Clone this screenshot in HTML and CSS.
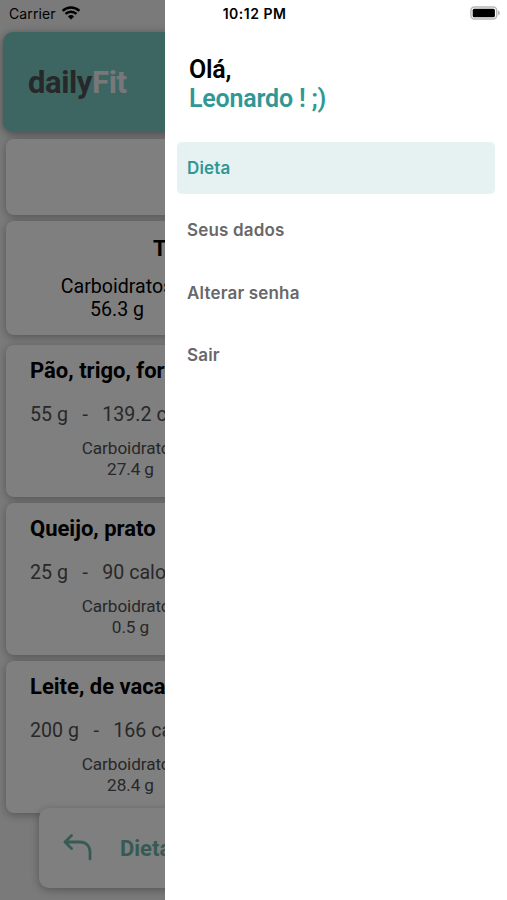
FILE: index.html
```
<!DOCTYPE html>
<html lang="pt-BR">
  <head>
    <meta charset="UTF-8">
    <title>dailyFit</title>
    <link rel="stylesheet" href="styles.css">
  </head>
  <body>
    <div class="screen">
      <div class="header">
        <h1 class="logo">daily<span>Fit</span></h1>
      </div>

      <div class="card date-card"></div>

      <div class="card total-card">
        <h2>Total</h2>
        <div class="nutrient">
          <p>Carboidratos</p>
          <p>56.3 g</p>
        </div>
      </div>

      <div class="card food-card">
        <h2>Pão, trigo, forma</h2>
        <p class="amount"><span>55 g</span><span>-</span><span>139.2 calorias</span></p>
        <div class="nutrient">
          <p>Carboidratos</p>
          <p>27.4 g</p>
        </div>
      </div>

      <div class="card food-card">
        <h2>Queijo, prato</h2>
        <p class="amount"><span>25 g</span><span>-</span><span>90 calorias</span></p>
        <div class="nutrient">
          <p>Carboidratos</p>
          <p>0.5 g</p>
        </div>
      </div>

      <div class="card food-card">
        <h2>Leite, de vaca</h2>
        <p class="amount"><span>200 g</span><span>-</span><span>166 calorias</span></p>
        <div class="nutrient">
          <p>Carboidratos</p>
          <p>28.4 g</p>
        </div>
      </div>

      <div class="bottom-bar">
        <svg class="back-icon" width="30" height="28" viewBox="0 0 30 28">
          <path d="M8.500 1.500L2 8l6.500 6.500M2 8h14.500c6.500 0 10.500 4 10.500 10v7" />
        </svg>
        <span>Dieta</span>
      </div>
    </div>

    <div class="overlay"></div>

    <div class="drawer">
      <h2 class="greeting">Olá,<br><span>Leonardo ! ;)</span></h2>
      <ul class="menu">
        <li class="active">Dieta</li>
        <li>Seus dados</li>
        <li>Alterar senha</li>
        <li>Sair</li>
      </ul>
    </div>

    <div class="status-bar">
      <div class="carrier">
        <span>Carrier</span>
        <svg width="18" height="14" viewBox="0 0 18 14">
          <path d="M0.600 4.900a12 12 0 0 1 16.800 0" />
          <path d="M3.500 7.900a8 8 0 0 1 11 0" />
          <path class="dot" d="M9 13.500L5.900 10.400a4.500 4.500 0 0 1 6.200 0z" />
        </svg>
      </div>
      <span class="time">10:12 PM</span>
      <svg class="battery" width="30" height="14" viewBox="0 0 30 14">
        <rect class="shell" x="0.900" y="0.900" width="25.800" height="12.200" rx="3.500" />
        <rect x="2.700" y="2.700" width="22.200" height="8.600" rx="1.500" />
        <path class="tip" d="M28 4.500c2.500 1 2.500 4 0 5z" />
      </svg>
    </div>
  </body>
</html>
```

FILE: styles.css
```
:root {
  --primary-color: #7accc6;
  --highlight-color: #319795;
  --bg-color: #f4f4f4;
}

* {
  box-sizing: border-box;
}

body {
  position: relative;
  width: 507px;
  height: 900px;
  margin: 0;
  overflow: hidden;
  font-family: "Roboto", sans-serif;
  color: #000;
  background-color: var(--bg-color);
}

h1,
h2,
p,
ul {
  margin: 0;
  padding: 0;
}

.screen {
  display: flex;
  flex-direction: column;
  height: 900px;
  padding: 32px 6px 0;
  overflow: hidden;
}

.header {
  display: flex;
  flex-shrink: 0;
  align-items: center;
  height: 100px;
  margin: 0 -3px 7px;
  padding-left: 25px;
  border-radius: 10px;
  background-color: var(--primary-color);
  box-shadow: 0 2px 9px rgba(0, 0, 0, 0.4);
}

.logo {
  font-size: 31px;
  font-weight: 700;
  letter-spacing: -0.4px;
  color: #4e5054;
}

.logo span {
  color: #f0f0f4;
}

.card {
  flex-shrink: 0;
  margin-bottom: 6px;
  border-radius: 8px;
  background-color: #fff;
  box-shadow: 0 2px 8px rgba(0, 0, 0, 0.3);
  white-space: nowrap;
}

.date-card {
  height: 76px;
}

.total-card {
  height: 114px;
  margin-bottom: 10px;
  padding: 15px 0 0 55px;
}

.total-card h2 {
  margin-left: 92px;
  font-size: 22px;
  line-height: 26px;
}

.total-card .nutrient {
  width: 112px;
  margin-top: 13px;
  font-size: 19.6px;
  line-height: 23px;
}

.food-card {
  height: 152px;
  padding: 12px 0 0 24px;
}

.food-card h2 {
  font-size: 22px;
  line-height: 28px;
}

.amount {
  display: flex;
  gap: 14.500px;
  margin-top: 18px;
  font-size: 19.6px;
  line-height: 24px;
  color: #505050;
}

.nutrient {
  display: flex;
  flex-direction: column;
  align-items: center;
}

.food-card .nutrient {
  width: 97px;
  margin: 11px 0 0 52px;
  font-size: 17.2px;
  line-height: 20.500px;
  letter-spacing: -0.1px;
  color: #505050;
}

.bottom-bar {
  display: flex;
  flex-shrink: 0;
  align-items: center;
  gap: 27px;
  height: 80px;
  margin: -11px 33px 0;
  padding-left: 24px;
  border-radius: 10px;
  background-color: #fff;
  box-shadow: 0 2px 8px rgba(0, 0, 0, 0.3);
  font-size: 22px;
  font-weight: bold;
  color: #6fb5a8;
  z-index: 1;
}

.back-icon {
  fill: none;
  stroke: #6fb5a8;
  stroke-width: 2.8;
  stroke-linecap: round;
  stroke-linejoin: round;
}

.overlay {
  position: absolute;
  inset: 0;
  z-index: 2;
  background-color: rgba(0, 0, 0, 0.5);
}

.drawer {
  position: absolute;
  top: 0;
  right: 0;
  bottom: 0;
  z-index: 3;
  width: 342px;
  padding: 55px 12px 0;
  background-color: #fff;
}

.greeting {
  padding-left: 12px;
  font-size: 25px;
  font-weight: 600;
  line-height: 29px;
  letter-spacing: -0.2px;
}

.greeting span {
  color: var(--highlight-color);
}

.menu {
  display: flex;
  flex-direction: column;
  gap: 10px;
  margin-top: 29px;
  list-style: none;
}

.menu li {
  height: 52.300px;
  padding-left: 10px;
  border-radius: 5px;
  font-family: "Inter", sans-serif;
  font-size: 17px;
  font-weight: 600;
  line-height: 53px;
  letter-spacing: 0.18px;
  color: #68686a;
}

.menu .active {
  color: var(--highlight-color);
  background-color: #e6f2f2;
}

.status-bar {
  position: absolute;
  top: 0;
  left: 0;
  z-index: 4;
  display: grid;
  grid-template-columns: 1fr auto 1fr;
  align-items: center;
  width: 507px;
  height: 26px;
  padding: 0 7px 0 9px;
  font-family: "Inter", sans-serif;
  font-size: 14px;
}

.carrier {
  display: flex;
  align-items: center;
  gap: 6px;
  letter-spacing: 0.1px;
}

.carrier path {
  fill: none;
  stroke: #000;
  stroke-width: 2.4;
}

.carrier .dot {
  fill: #000;
  stroke: none;
}

.time {
  font-weight: 600;
  letter-spacing: 0.5px;
}

.battery {
  justify-self: end;
}

.battery .shell {
  fill: none;
  stroke: #b8b8b8;
  stroke-width: 1.5;
}

.battery .tip {
  fill: #b8b8b8;
}
```
